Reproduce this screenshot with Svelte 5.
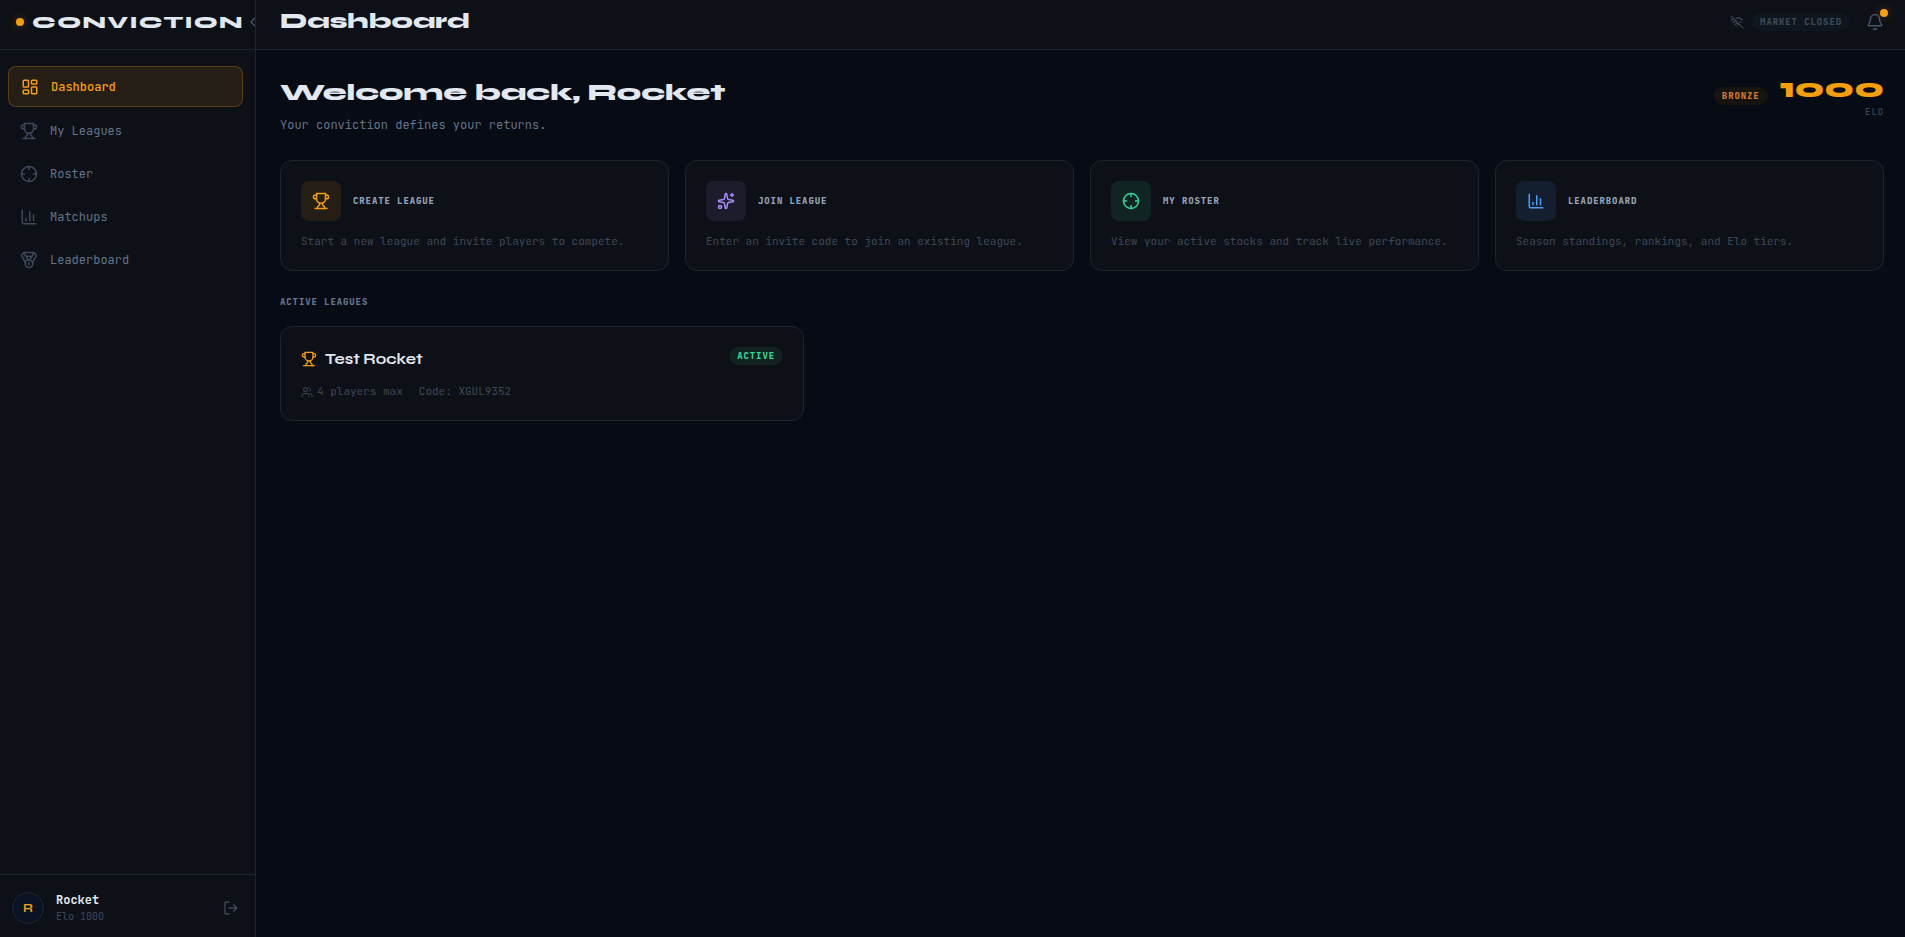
<script lang="ts">
	const user = { name: 'Rocket', elo: 1000, tier: 'Bronze' };

	const navItems = [
		{ label: 'Dashboard', icon: 'dashboard', href: '#dashboard' },
		{ label: 'My Leagues', icon: 'trophy', href: '#leagues' },
		{ label: 'Roster', icon: 'crosshair', href: '#roster' },
		{ label: 'Matchups', icon: 'chart', href: '#matchups' },
		{ label: 'Leaderboard', icon: 'medal', href: '#leaderboard' }
	];

	const actions = [
		{ title: 'Create League', text: 'Start a new league and invite players to compete.', icon: 'trophy', tone: 'amber' },
		{ title: 'Join League', text: 'Enter an invite code to join an existing league.', icon: 'sparkles', tone: 'violet' },
		{ title: 'My Roster', text: 'View your active stocks and track live performance.', icon: 'crosshair', tone: 'green' },
		{ title: 'Leaderboard', text: 'Season standings, rankings, and Elo tiers.', icon: 'chart', tone: 'blue' }
	];

	const leagues = [{ name: 'Test Rocket', players: 4, code: 'XGUL9352', status: 'Active' }];

	let active = $state('Dashboard');
</script>

{#snippet icon(name: string, size: number)}
	<svg
		width={size}
		height={size}
		viewBox="0 0 24 24"
		fill="none"
		stroke="currentColor"
		stroke-width="2"
		stroke-linecap="round"
		stroke-linejoin="round"
		aria-hidden="true"
	>
		{#if name === 'dashboard'}
			<rect x="3" y="3" width="7" height="9" rx="1" />
			<rect x="14" y="3" width="7" height="5" rx="1" />
			<rect x="14" y="12" width="7" height="9" rx="1" />
			<rect x="3" y="16" width="7" height="5" rx="1" />
		{:else if name === 'trophy'}
			<path d="M6 9H4.5a2.5 2.5 0 0 1 0-5H6" />
			<path d="M18 9h1.5a2.5 2.5 0 0 0 0-5H18" />
			<path d="M4 22h16" />
			<path d="M10 14.66V17c0 .55-.47.98-.97 1.21C7.85 18.75 7 20.24 7 22" />
			<path d="M14 14.66V17c0 .55.47.98.97 1.21C16.15 18.75 17 20.24 17 22" />
			<path d="M18 2H6v7a6 6 0 0 0 12 0V2Z" />
		{:else if name === 'crosshair'}
			<circle cx="12" cy="12" r="10" />
			<path d="M22 12h-4M6 12H2M12 6V2M12 22v-4" />
		{:else if name === 'chart'}
			<path d="M3 3v16a2 2 0 0 0 2 2h16" />
			<path d="M18 17V9M13 17V5M8 17v-3" />
		{:else if name === 'medal'}
			<path d="M7.21 15 2.66 7.14a2 2 0 0 1 .13-2.2L4.4 2.8A2 2 0 0 1 6 2h12a2 2 0 0 1 1.6.8l1.6 2.14a2 2 0 0 1 .14 2.2L16.79 15" />
			<path d="M11 12 5.12 2.2M13 12l5.88-9.8M8 7h8" />
			<circle cx="12" cy="17" r="5" />
			<path d="M12 18v-2h-.5" />
		{:else if name === 'sparkles'}
			<path d="M11.017 2.814a1 1 0 0 1 1.966 0l1.051 5.558a2 2 0 0 0 1.594 1.594l5.558 1.051a1 1 0 0 1 0 1.966l-5.558 1.051a2 2 0 0 0-1.594 1.594l-1.051 5.558a1 1 0 0 1-1.966 0l-1.051-5.558a2 2 0 0 0-1.594-1.594l-5.558-1.051a1 1 0 0 1 0-1.966l5.558-1.051a2 2 0 0 0 1.594-1.594z" />
			<path d="M20 2v4M22 4h-4" />
			<circle cx="4" cy="20" r="2" />
		{:else if name === 'bell'}
			<path d="M10.268 21a2 2 0 0 0 3.464 0" />
			<path d="M3.262 15.326A1 1 0 0 0 4 17h16a1 1 0 0 0 .74-1.673C19.41 13.956 18 12.499 18 8A6 6 0 0 0 6 8c0 4.499-1.411 5.956-2.738 7.326" />
		{:else if name === 'wifi-off'}
			<path d="M12 20h.01M8.5 16.429a5 5 0 0 1 7 0" />
			<path d="M5 12.859a10 10 0 0 1 5.17-2.69M19 12.859a10 10 0 0 0-2.007-1.523" />
			<path d="M2 8.82a15 15 0 0 1 4.177-2.643M22 8.82a15 15 0 0 0-11.288-3.764" />
			<path d="m2 2 20 20" />
		{:else if name === 'users'}
			<path d="M16 21v-2a4 4 0 0 0-4-4H6a4 4 0 0 0-4 4v2" />
			<circle cx="9" cy="7" r="4" />
			<path d="M22 21v-2a4 4 0 0 0-3-3.87M16 3.13a4 4 0 0 1 0 7.75" />
		{:else if name === 'logout'}
			<path d="m16 17 5-5-5-5M21 12H9" />
			<path d="M9 21H5a2 2 0 0 1-2-2V5a2 2 0 0 1 2-2h4" />
		{:else if name === 'chevron'}
			<path d="m15 18-6-6 6-6" />
		{/if}
	</svg>
{/snippet}

<div class="shell">
	<aside class="sidebar">
		<div class="brand">
			<span class="brand-dot"></span>
			<span class="brand-name">CONVICTION</span>
			<button class="collapse" aria-label="Collapse sidebar">{@render icon('chevron', 16)}</button>
		</div>

		<nav>
			{#each navItems as item}
				<a href={item.href} class:active={active === item.label} onclick={() => (active = item.label)}>
					{@render icon(item.icon, 18)}
					{item.label}
				</a>
			{/each}
		</nav>

		<div class="profile">
			<span class="avatar">{user.name[0]}</span>
			<div class="profile-text">
				<span class="profile-name">{user.name}</span>
				<span class="profile-elo">Elo {user.elo}</span>
			</div>
			<button class="logout" aria-label="Log out">{@render icon('logout', 16)}</button>
		</div>
	</aside>

	<div class="page">
		<header class="topbar">
			<h1>{active}</h1>
			<div class="market">
				{@render icon('wifi-off', 14)}
				<span class="badge">Market closed</span>
			</div>
			<button class="bell" aria-label="Notifications">
				{@render icon('bell', 18)}
				<span class="bell-dot"></span>
			</button>
		</header>

		<main>
			<section class="welcome">
				<div>
					<h2>Welcome back, {user.name}</h2>
					<p>Your conviction defines your returns.</p>
				</div>
				<div class="rating">
					<span class="badge bronze">{user.tier}</span>
					<div class="score">
						<strong>{user.elo}</strong>
						<span>ELO</span>
					</div>
				</div>
			</section>

			<section class="actions">
				{#each actions as action}
					<button class="card">
						<span class="card-head">
							<span class="tile {action.tone}">{@render icon(action.icon, 18)}</span>
							<span class="card-title">{action.title}</span>
						</span>
						<span class="card-text">{action.text}</span>
					</button>
				{/each}
			</section>

			<section>
				<h3>Active leagues</h3>
				<div class="leagues">
					{#each leagues as league}
						<a class="card" href="#league">
							<span class="league-head">
								{@render icon('trophy', 16)}
								<span class="league-name">{league.name}</span>
								<span class="badge live">{league.status}</span>
							</span>
							<span class="league-meta">
								<span class="players">{@render icon('users', 12)}{league.players} players max</span>
								<span>Code: {league.code}</span>
							</span>
						</a>
					{/each}
				</div>
			</section>
		</main>
	</div>
</div>

<style>
	:global(body) {
		background: #060b14;
	}

	.shell {
		--panel: #0d1017;
		--line: #1e2330;
		--amber: #f59e0b;
		--muted: #3d4959;
		--display: 'Syne', 'DejaVu Sans', sans-serif;
		display: flex;
		min-height: 100vh;
		background: #060b14;
		color: #e2e8f0;
		font-family: 'JetBrains Mono', 'DejaVu Sans Mono', monospace;
		font-size: 12px;
		line-height: 18px;
	}

	.shell :global(*) {
		box-sizing: border-box;
	}

	svg {
		display: block;
		flex-shrink: 0;
	}

	button {
		padding: 0;
		border: none;
		background: none;
		color: inherit;
		font: inherit;
		cursor: pointer;
	}

	a {
		color: inherit;
		text-decoration: none;
	}

	h1,
	h2,
	h3,
	p {
		margin: 0;
	}

	.sidebar {
		display: flex;
		flex-direction: column;
		flex-shrink: 0;
		width: 256px;
		overflow: hidden;
		background: var(--panel);
		border-right: 1px solid var(--line);
	}

	.brand {
		display: flex;
		align-items: center;
		height: 50px;
		padding: 0 0 6px 16px;
		border-bottom: 1px solid var(--line);
	}

	.brand-dot {
		flex-shrink: 0;
		width: 8px;
		height: 8px;
		margin-right: 8px;
		border-radius: 50%;
		background: var(--amber);
		box-shadow: 0 0 10px rgba(245, 158, 11, 0.3);
	}

	.brand-name {
		flex-shrink: 0;
		width: 213px;
		font-family: var(--display);
		font-size: 18px;
		font-weight: 800;
		letter-spacing: 0.08em;
	}

	.collapse {
		color: #475569;
	}

	nav {
		display: flex;
		flex: 1;
		flex-direction: column;
		gap: 4px;
		padding: 16px 12px 16px 8px;
	}

	nav a {
		display: flex;
		align-items: center;
		gap: 12px;
		height: 39px;
		padding: 0 12px;
		border-radius: 8px;
		color: #64748b;
	}

	nav a svg {
		color: #3d495b;
	}

	nav a.active {
		height: 41px;
		border: 1px solid rgba(245, 158, 11, 0.25);
		background: rgba(245, 158, 11, 0.1);
		font-weight: 500;
	}

	nav a.active,
	nav a.active svg {
		color: var(--amber);
	}

	.profile {
		display: flex;
		align-items: center;
		gap: 12px;
		padding: 16px 16px 12px 12px;
		border-top: 1px solid var(--line);
	}

	.avatar {
		display: grid;
		place-items: center;
		width: 32px;
		height: 32px;
		border: 1px solid #1c2534;
		border-radius: 50%;
		background: #0a1424;
		color: var(--amber);
		font-family: var(--display);
		font-size: 12px;
		font-weight: 700;
	}

	.profile-text {
		display: flex;
		flex: 1;
		flex-direction: column;
	}

	.profile-name {
		font-weight: 700;
	}

	.profile-elo {
		color: var(--muted);
		font-size: 10px;
		line-height: 16px;
	}

	.logout {
		color: var(--muted);
	}

	.page {
		flex: 1;
		min-width: 0;
	}

	.topbar {
		display: flex;
		align-items: center;
		gap: 16px;
		height: 50px;
		padding: 0 21px 6px 24px;
		background: var(--panel);
		border-bottom: 1px solid var(--line);
	}

	h1 {
		flex: 1;
		font-family: var(--display);
		font-size: 21px;
		font-weight: 800;
		line-height: 32px;
	}

	.market {
		display: flex;
		align-items: center;
		gap: 8px;
		color: var(--muted);
	}

	.badge {
		padding: 0 8px;
		border-radius: 9px;
		background: #0f161d;
		font-size: 9px;
		font-weight: 800;
		line-height: 18px;
		letter-spacing: 0.1em;
		text-transform: uppercase;
		white-space: nowrap;
	}

	.badge.bronze {
		background: #17140f;
		color: #cd7a32;
	}

	.badge.live {
		align-self: flex-start;
		background: #112220;
		color: #34d399;
	}

	.bell {
		position: relative;
		color: #475569;
	}

	.bell-dot {
		position: absolute;
		top: -4px;
		right: -4px;
		width: 8px;
		height: 8px;
		border-radius: 50%;
		background: var(--amber);
		box-shadow: 0 0 10px rgba(245, 158, 11, 0.3);
	}

	main {
		padding: 24px 21px 24px 24px;
	}

	.welcome {
		display: flex;
		align-items: flex-start;
		justify-content: space-between;
		margin-bottom: 26px;
	}

	h2 {
		margin-bottom: 4px;
		font-family: var(--display);
		font-size: 24px;
		font-weight: 800;
		line-height: 38px;
	}

	.welcome p {
		color: #64748b;
	}

	.rating {
		display: flex;
		align-items: center;
		gap: 12px;
	}

	.score {
		display: flex;
		flex-direction: column;
		align-items: flex-end;
		gap: 4px;
	}

	.score strong {
		color: var(--amber);
		font-family: var(--display);
		font-size: 28px;
		font-weight: 800;
		line-height: 28px;
	}

	.score span {
		color: var(--muted);
		font-size: 9px;
		font-weight: 500;
		line-height: 12px;
		letter-spacing: 0.1em;
	}

	.actions {
		display: grid;
		grid-template-columns: repeat(4, 1fr);
		gap: 16px;
		margin-bottom: 24px;
	}

	.card {
		display: flex;
		flex-direction: column;
		gap: 12px;
		padding: 20px;
		border: 1px solid var(--line);
		border-radius: 12px;
		background: var(--panel);
		text-align: left;
	}

	.card:hover {
		border-color: #2c3446;
	}

	.card-head {
		display: flex;
		align-items: center;
		gap: 12px;
	}

	.tile {
		display: grid;
		place-items: center;
		width: 40px;
		height: 40px;
		border-radius: 8px;
	}

	.amber {
		background: rgba(245, 158, 11, 0.1);
		color: var(--amber);
	}

	.violet {
		background: rgba(167, 139, 250, 0.1);
		color: #a78bfa;
	}

	.green {
		background: rgba(52, 211, 153, 0.1);
		color: #34d399;
	}

	.blue {
		background: rgba(74, 158, 255, 0.1);
		color: #4a9eff;
	}

	.card-title {
		color: #94a3b8;
		font-size: 9px;
		font-weight: 800;
		letter-spacing: 0.1em;
		text-transform: uppercase;
	}

	.card-text,
	.league-meta {
		color: var(--muted);
		font-size: 11px;
		line-height: 17px;
	}

	h3 {
		margin-bottom: 17px;
		color: #64748b;
		font-size: 9px;
		font-weight: 800;
		line-height: 14px;
		letter-spacing: 0.1em;
		text-transform: uppercase;
	}

	.leagues {
		display: grid;
		grid-template-columns: repeat(3, 1fr);
		gap: 16px;
	}

	.league-head {
		display: flex;
		align-items: center;
		gap: 8px;
		color: var(--amber);
	}

	.league-name {
		flex: 1;
		color: #e2e8f0;
		font-family: var(--display);
		font-size: 15px;
		font-weight: 700;
		line-height: 24px;
	}

	.league-meta {
		display: flex;
		gap: 16px;
	}

	.players {
		display: flex;
		align-items: center;
		gap: 4px;
	}
</style>
